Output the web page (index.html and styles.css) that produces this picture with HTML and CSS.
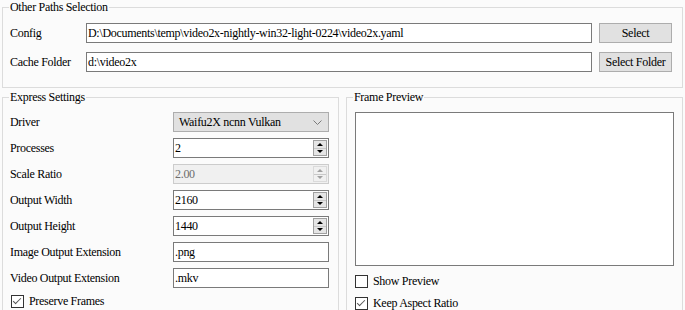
FILE: index.html
```html
<!DOCTYPE html>
<html>
  <head>
    <title>Video2X</title>
    <link rel="stylesheet" href="styles.css">
  </head>
  <body>
    <div class="window">
      <fieldset class="group paths">
        <legend>Other Paths Selection</legend>
        <div class="paths-grid">
          <label>Config</label>
          <div class="field">D:\Documents\temp\video2x-nightly-win32-light-0224\video2x.yaml</div>
          <button class="btn">Select</button>
          <label>Cache Folder</label>
          <div class="field">d:\video2x</div>
          <button class="btn">Select Folder</button>
        </div>
      </fieldset>

      <div class="columns">
        <fieldset class="group express">
          <legend>Express Settings</legend>
          <div class="form-grid">
            <label>Driver</label>
            <div class="combo">
              <span>Waifu2X ncnn Vulkan</span>
              <svg class="chevron" width="9" height="5" viewBox="0 0 9 5">
                <path d="M0.5 0.5 L4.5 4.5 L8.5 0.5" fill="none" stroke="#7a7a7a" stroke-width="1"/>
              </svg>
            </div>

            <label>Processes</label>
            <div class="field spin">
              <span>2</span>
              <div class="spin-btns">
                <div class="up"></div>
                <div class="down"></div>
              </div>
            </div>

            <label>Scale Ratio</label>
            <div class="field spin disabled">
              <span>2.00</span>
              <div class="spin-btns">
                <div class="up"></div>
                <div class="down"></div>
              </div>
            </div>

            <label>Output Width</label>
            <div class="field spin">
              <span>2160</span>
              <div class="spin-btns">
                <div class="up"></div>
                <div class="down"></div>
              </div>
            </div>

            <label>Output Height</label>
            <div class="field spin">
              <span>1440</span>
              <div class="spin-btns">
                <div class="up"></div>
                <div class="down"></div>
              </div>
            </div>

            <label>Image Output Extension</label>
            <div class="field">.png</div>

            <label>Video Output Extension</label>
            <div class="field">.mkv</div>
          </div>
          <div class="check">
            <span class="box checked"></span>
            <span>Preserve Frames</span>
          </div>
        </fieldset>

        <fieldset class="group preview">
          <legend>Frame Preview</legend>
          <div class="preview-box"></div>
          <div class="check">
            <span class="box"></span>
            <span>Show Preview</span>
          </div>
          <div class="check">
            <span class="box checked"></span>
            <span>Keep Aspect Ratio</span>
          </div>
        </fieldset>
      </div>
    </div>
  </body>
</html>
```

FILE: styles.css
```css
body {
  margin: 0;
  background: #fbfbfb;
  font-family: "Liberation Serif", "Times New Roman", serif;
  font-size: 12px;
  letter-spacing: -0.3px;
  color: #000000;
  overflow: hidden;
}

.window {
  width: 681px;
  margin: 0 2px 0 2px;
}

.group {
  margin: 0;
  border: 1px solid #dcdcdc;
  min-width: 0;
}
.group legend {
  padding: 0 1px;
  margin-left: -1px;
  line-height: 14px;
  height: 14px;
}

/* other paths */
.group.paths {
  padding: 9px 10px 15px 7px;
}
.paths-grid {
  display: grid;
  grid-template-columns: 69px 1fr 73px;
  column-gap: 7px;
  row-gap: 9px;
  align-items: center;
}

label {
  line-height: 20px;
}

.field {
  height: 18px;
  line-height: 18px;
  border: 1px solid #7a7a7a;
  background: #ffffff;
  padding: 0 1px;
  white-space: nowrap;
  overflow: hidden;
}

.btn {
  height: 20px;
  margin: 0;
  padding: 0;
  border: 1px solid #adadad;
  background: #e1e1e1;
  font: inherit;
  letter-spacing: inherit;
  color: #000000;
}

.columns {
  display: flex;
  gap: 7px;
  margin-top: 2px;
}

/* express settings */
.group.express {
  width: 337px;
  box-sizing: border-box;
  padding: 8px 9px 0 7px;
}
.form-grid {
  display: grid;
  grid-template-columns: 1fr 156px;
  row-gap: 6px;
}

.combo {
  display: flex;
  align-items: center;
  justify-content: space-between;
  height: 18px;
  border: 1px solid #adadad;
  background: #e1e1e1;
  padding: 0 6px 0 5px;
}

.spin {
  display: flex;
  align-items: center;
  justify-content: space-between;
  padding-right: 1px;
}
.spin-btns {
  display: flex;
  flex-direction: column;
  width: 12px;
  height: 14px;
  border: 1px solid #a0a0a0;
  background: #e5e5e5;
}
.spin-btns div {
  flex: 1;
  display: flex;
  align-items: center;
  justify-content: center;
}
.spin-btns .up {
  border-bottom: 1px solid #c8c8c8;
}
.spin-btns .up::after,
.spin-btns .down::after {
  content: "";
  border-left: 3px solid transparent;
  border-right: 3px solid transparent;
}
.spin-btns .up::after {
  border-bottom: 3px solid #000000;
}
.spin-btns .down::after {
  border-top: 3px solid #000000;
}

.spin.disabled {
  background: #f0f0f0;
  border-color: #cccccc;
  color: #6d6d6d;
}
.spin.disabled .spin-btns {
  border-color: #dadada;
  background: #f0f0f0;
}
.spin.disabled .up::after {
  border-bottom-color: #a0a0a0;
}
.spin.disabled .down::after {
  border-top-color: #a0a0a0;
}

.check {
  display: flex;
  align-items: center;
  gap: 5px;
  height: 14px;
  margin-top: 6px;
}
.group.express .check {
  margin-left: 1px;
}
.box {
  width: 11px;
  height: 11px;
  border: 1px solid #333333;
  background: #ffffff;
  position: relative;
}
.box.checked::after {
  content: "";
  position: absolute;
  left: 3px;
  top: 0px;
  width: 3px;
  height: 7px;
  border-right: 1px solid #555555;
  border-bottom: 1px solid #555555;
  transform: rotate(45deg);
}

/* frame preview */
.group.preview {
  width: 337px;
  box-sizing: border-box;
  padding: 8px 8px 0 8px;
}
.group.preview legend {
  margin-left: -2px;
}
.preview-box {
  height: 152px;
  border: 1px solid #7a7a7a;
  background: #ffffff;
}
.group.preview .check {
  margin-top: 8px;
}
```
